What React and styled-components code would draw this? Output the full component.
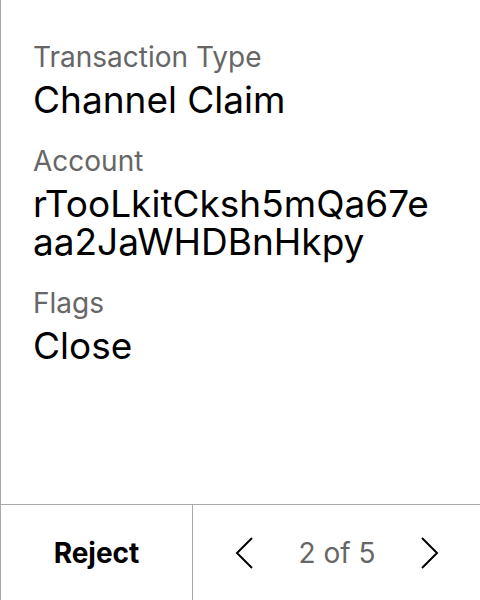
import React from "react";
import styled, { createGlobalStyle } from "styled-components";

const GlobalStyle = createGlobalStyle`
  html, body {
    margin: 0;
    padding: 0;
    background: #fff;
  }
  body {
    font-family: Inter, "Noto Sans", sans-serif;
  }
`;

const Screen = styled.div`
  width: 480px;
  height: 600px;
  box-sizing: border-box;
  border-left: 1px solid #aaa;
  display: flex;
  flex-direction: column;
`;

const Details = styled.div`
  flex: 1;
  padding: 40px 34px 0 32px;
  display: flex;
  flex-direction: column;
  gap: 25px;
`;

const Field = styled.div`
  display: flex;
  flex-direction: column;
  gap: 7px;
`;

const Label = styled.div`
  font-size: 28px;
  line-height: 34px;
  color: #666;
`;

const Value = styled.div`
  font-size: 37px;
  line-height: 38px;
  color: #000;
  word-break: break-all;
`;

const Footer = styled.div`
  height: 96px;
  box-sizing: border-box;
  border-top: 1px solid #aaa;
  display: flex;
`;

const RejectButton = styled.button`
  width: 192px;
  border: none;
  border-right: 1px solid #aaa;
  background: transparent;
  font-family: inherit;
  font-size: 28px;
  font-weight: 700;
  color: #000;
`;

const Pager = styled.div`
  flex: 1;
  display: flex;
  align-items: center;
  justify-content: space-between;
  padding: 0 38px 0 39px;
`;

const Arrow = styled.button`
  border: none;
  background: transparent;
  padding: 0;
  display: flex;
  color: #000;
`;

const Count = styled.span`
  font-size: 28px;
  color: #666;
`;

const Chevron = ({ dir }) => (
  <svg width="24" height="36" viewBox="0 0 24 36" fill="none" stroke="currentColor" strokeWidth="2">
    {dir === "left" ? <path d="M20 3 L5 18 L20 33" /> : <path d="M4 3 L19 18 L4 33" />}
  </svg>
);

const fields = [
  { label: "Transaction Type", value: "Channel Claim" },
  { label: "Account", value: "rTooLkitCksh5mQa67eaa2JaWHDBnHkpy" },
  { label: "Flags", value: "Close" },
];

export default function App() {
  return (
    <>
      <GlobalStyle />
      <Screen>
        <Details>
          {fields.map((f) => (
            <Field key={f.label}>
              <Label>{f.label}</Label>
              <Value>{f.value}</Value>
            </Field>
          ))}
        </Details>
        <Footer>
          <RejectButton>Reject</RejectButton>
          <Pager>
            <Arrow><Chevron dir="left" /></Arrow>
            <Count>2 of 5</Count>
            <Arrow><Chevron dir="right" /></Arrow>
          </Pager>
        </Footer>
      </Screen>
    </>
  );
}
